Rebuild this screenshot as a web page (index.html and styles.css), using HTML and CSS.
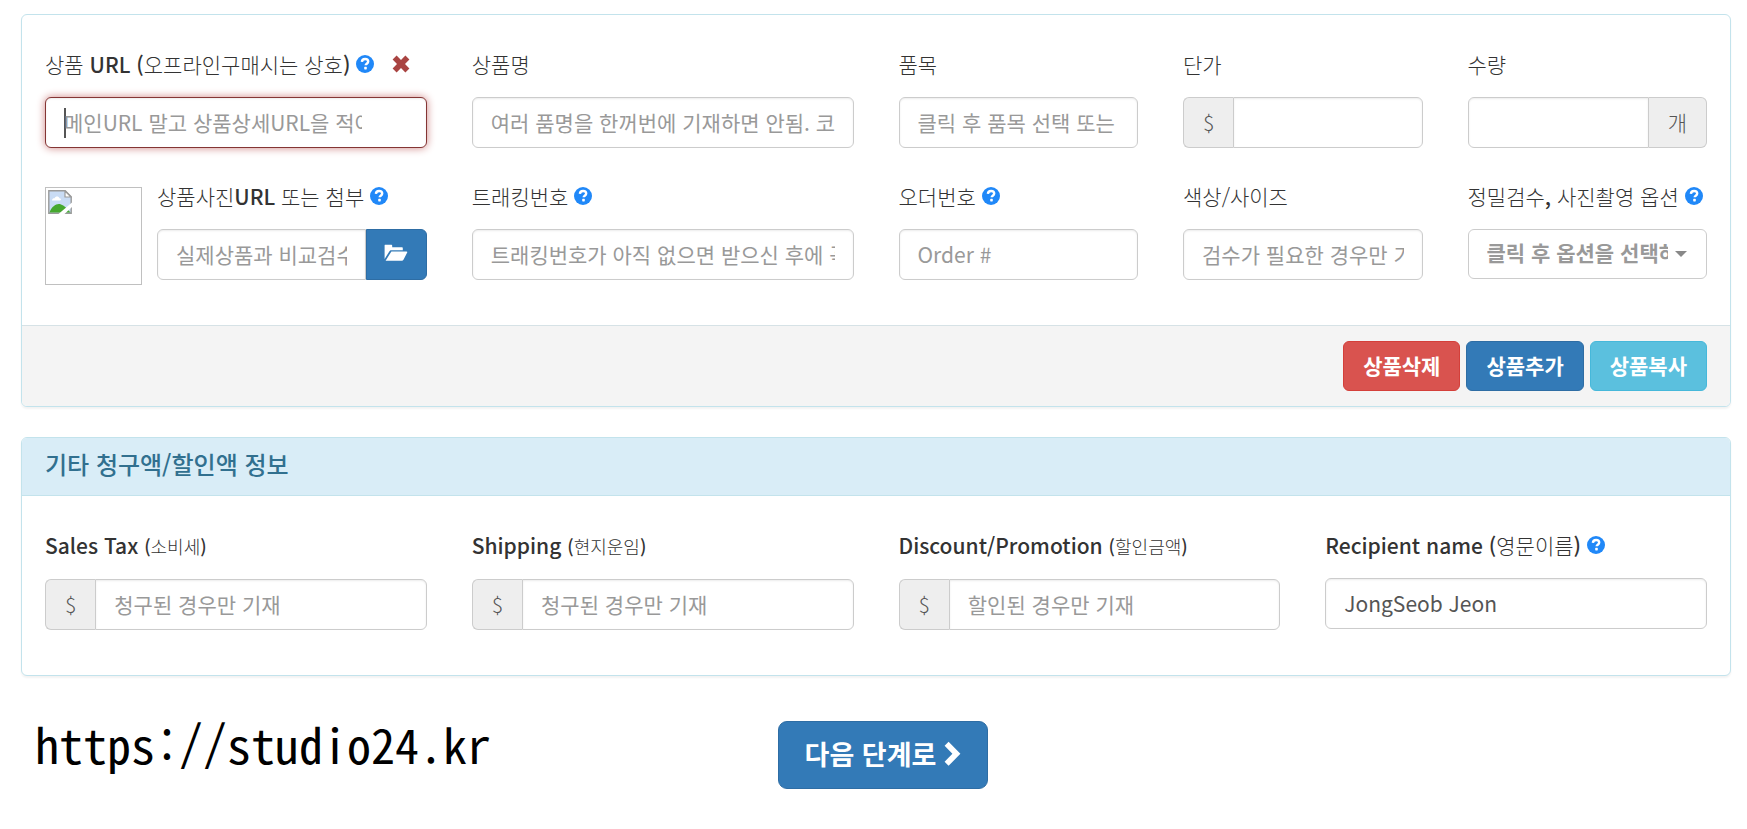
FILE: index.html
```
<!DOCTYPE html>
<html lang="ko">
<head>
  <meta charset="UTF-8">
  <title>상품 정보 입력</title>
  <link rel="stylesheet" href="styles.css">
</head>
<body>
  <!-- shared icons -->
  <svg class="sprite" width="0" height="0" aria-hidden="true">
    <symbol id="icon-help" viewBox="0 0 18 18">
      <circle cx="9" cy="9" r="9" fill="currentColor"/>
      <path d="M5.9 6.9C6 4.9 7.3 4 9.1 4c1.8 0 3.1 1 3.1 2.6 0 2.1-2.5 2.2-2.5 3.7" fill="none" stroke="#fff" stroke-width="2.4"/>
      <rect x="8.2" y="11.8" width="2.6" height="2.6" rx="0.6" fill="#fff"/>
    </symbol>
    <symbol id="icon-remove" viewBox="0 0 18 18">
      <path d="M4.6 0.6 9 5l4.4-4.4 4 4L13 9l4.4 4.4-4 4L9 13l-4.4 4.4-4-4L5 9 0.6 4.6z" fill="currentColor"/>
    </symbol>
    <symbol id="icon-folder" viewBox="0 0 24 18">
      <path d="M1 0.8h6.2c.6 0 1 .4 1 1v1.4h9.6c.6 0 1 .4 1 1v2H7.4c-1 0-1.6.4-2.1 1.2L.6 15V1.5C.6 1 .7.8 1 .8z" fill="currentColor"/>
      <path d="M7.4 7.4h15c.8 0 1.1.5.8 1.1l-3.6 7c-.4.8-1 1.2-1.9 1.2H1.6z" fill="currentColor"/>
    </symbol>
    <symbol id="icon-chevron" viewBox="0 0 17 26">
      <path d="M4.6 0.8 16.4 12.8 4.6 24.8 0.6 20.8 8.4 12.8 0.6 4.8z" fill="currentColor"/>
    </symbol>
  </svg>

  <form action="">
    <section class="panel">
      <div class="panel-body">
        <div class="field col-3">
          <div class="label-row">
            <label for="url">상품 <b>URL (</b>오프라인구매시는 상호<b>)</b></label>
            <svg class="icon help"><use href="#icon-help"/></svg>
            <svg class="icon remove"><use href="#icon-remove"/></svg>
          </div>
          <input id="url" class="control has-error" type="text" placeholder="메인URL 말고 상품상세URL을 적어주세요">
        </div>
        <div class="field col-3">
          <div class="label-row"><label for="name">상품명</label></div>
          <input id="name" class="control" type="text" placeholder="여러 품명을 한꺼번에 기재하면 안됨. 코드">
        </div>
        <div class="field col-2">
          <div class="label-row"><label for="item">품목</label></div>
          <input id="item" class="control" type="text" placeholder="클릭 후 품목 선택 또는 타이핑">
        </div>
        <div class="field col-2">
          <div class="label-row"><label for="price">단가</label></div>
          <div class="group">
            <span class="addon">$</span>
            <input id="price" class="control" type="text">
          </div>
        </div>
        <div class="field col-2">
          <div class="label-row"><label for="qty">수량</label></div>
          <div class="group">
            <input id="qty" class="control" type="text">
            <span class="addon">개</span>
          </div>
        </div>

        <div class="photo col-3">
          <div class="thumb">
            <svg width="24" height="24" viewBox="0 0 24 24">
              <path d="M0.8 0.8h16.4l6 6v16.4H0.8z" fill="#c9dcf5" stroke="#9a9a9a" stroke-width="1.4"/>
              <path d="M17 1v6h6z" fill="#fff" stroke="#9a9a9a" stroke-width="1.2"/>
              <path d="M4 10.5c0-2 1.6-2.5 2.6-2.3C7.2 6 11 6 11.4 8.3c1.8 0 2.2 2.2.6 2.2z" fill="#fff"/>
              <path d="M1.5 22.5C4 16 9 13 13 14.5c3 .8 6 4 9.5 8z" fill="#46a82f"/>
              <path d="M10.5 24 24 12.5V17l-7.5 7z" fill="#fff"/>
            </svg>
          </div>
          <div class="field">
            <div class="label-row">
              <label for="photo">상품사진<b>URL</b> 또는 첨부</label>
              <svg class="icon help"><use href="#icon-help"/></svg>
            </div>
            <div class="group">
              <input id="photo" class="control" type="text" placeholder="실제상품과 비교검수">
              <button class="browse" type="button" aria-label="첨부"><svg width="24" height="18"><use href="#icon-folder"/></svg></button>
            </div>
          </div>
        </div>
        <div class="field col-3">
          <div class="label-row">
            <label for="tracking">트래킹번호</label>
            <svg class="icon help"><use href="#icon-help"/></svg>
          </div>
          <input id="tracking" class="control" type="text" placeholder="트래킹번호가 아직 없으면 받으신 후에 꼭 기재">
        </div>
        <div class="field col-2">
          <div class="label-row">
            <label for="order">오더번호</label>
            <svg class="icon help"><use href="#icon-help"/></svg>
          </div>
          <input id="order" class="control" type="text" placeholder="Order #">
        </div>
        <div class="field col-2">
          <div class="label-row"><label for="size">색상/사이즈</label></div>
          <input id="size" class="control" type="text" placeholder="검수가 필요한 경우만 기재">
        </div>
        <div class="field col-2">
          <div class="label-row">
            <label for="option">정밀검수<b>,</b> 사진촬영 옵션</label>
            <svg class="icon help"><use href="#icon-help"/></svg>
          </div>
          <div class="select">
            <select id="option">
              <option>클릭 후 옵션을 선택하세요</option>
            </select>
          </div>
        </div>
      </div>
      <div class="panel-footer">
        <button class="btn btn-danger" type="button">상품삭제</button>
        <button class="btn btn-primary" type="button">상품추가</button>
        <button class="btn btn-info" type="button">상품복사</button>
      </div>
    </section>

    <section class="panel">
      <h2 class="panel-heading">기타 청구액/할인액 정보</h2>
      <div class="panel-body">
        <div class="field col-3">
          <div class="label-row"><label for="tax"><b>Sales Tax</b> <small><b>(</b>소비세<b>)</b></small></label></div>
          <div class="group">
            <span class="addon">$</span>
            <input id="tax" class="control" type="text" placeholder="청구된 경우만 기재">
          </div>
        </div>
        <div class="field col-3">
          <div class="label-row"><label for="shipping"><b>Shipping</b> <small><b>(</b>현지운임<b>)</b></small></label></div>
          <div class="group">
            <span class="addon">$</span>
            <input id="shipping" class="control" type="text" placeholder="청구된 경우만 기재">
          </div>
        </div>
        <div class="field col-3">
          <div class="label-row"><label for="discount"><b>Discount/Promotion</b> <small><b>(</b>할인금액<b>)</b></small></label></div>
          <div class="group">
            <span class="addon">$</span>
            <input id="discount" class="control" type="text" placeholder="할인된 경우만 기재">
          </div>
        </div>
        <div class="field col-3">
          <div class="label-row">
            <label for="recipient"><b>Recipient name (</b>영문이름<b>)</b></label>
            <svg class="icon help"><use href="#icon-help"/></svg>
          </div>
          <input id="recipient" class="control" type="text" value="JongSeob Jeon">
        </div>
      </div>
    </section>

    <div class="actions">
      <p class="site">https://studio24.kr</p>
      <button class="btn btn-primary btn-lg" type="submit">다음 단계로 <svg width="17" height="26"><use href="#icon-chevron"/></svg></button>
    </div>
  </form>
</body>
</html>
```
FILE: styles.css
```
* {
  box-sizing: border-box;
}

body {
  margin: 0;
  padding: 14px 16px 32px 21px;
  background: #fff;
  color: #333;
  font-family: "Noto Sans CJK KR", sans-serif;
  font-size: 21px;
  line-height: 30px;
}

.sprite {
  position: absolute;
}

.panel {
  margin-bottom: 30px;
  border: 1px solid #c3e3ec;
  border-radius: 6px;
  background: #fff;
  box-shadow: 0 2px 2px rgba(0, 0, 0, 0.05);
  overflow: hidden;
}

.panel-heading {
  margin: 0;
  padding: 11px 23px 16px;
  border-bottom: 1px solid #c3e3ec;
  background: #d9edf7;
  color: #31708f;
  font-size: 24px;
  font-weight: 500;
}

.panel-body {
  display: grid;
  grid-template-columns: repeat(12, minmax(0, 1fr));
  gap: 33px 45px;
  padding: 34px 23px 45px;
}

.col-3 {
  grid-column: span 3;
}

.col-2 {
  grid-column: span 2;
}

.panel-footer {
  display: flex;
  justify-content: flex-end;
  gap: 6px;
  padding: 15px 23px;
  border-top: 1px solid #d6e2e6;
  background: #f4f4f4;
}

/* fields */
.field {
  min-width: 0;
}

.label-row {
  display: flex;
  align-items: center;
  margin-bottom: 18px;
  white-space: nowrap;
}

label {
  font-weight: 300;
}

label b {
  font-weight: 500;
}

label small {
  font-size: 18px;
}

.icon {
  flex: none;
  width: 18px;
  height: 18px;
  margin-left: 6px;
}

.help {
  color: #2088f8;
}

.remove {
  margin-left: 18px;
  color: #a94442;
}

.control {
  display: block;
  width: 100%;
  min-width: 0;
  height: 51px;
  padding: 0 18px 2px;
  border: 1px solid #ccc;
  border-radius: 6px;
  background: #fff;
  box-shadow: inset 0 1px 2px rgba(0, 0, 0, 0.08);
  color: #555;
  font: inherit;
  outline: none;
}

.control::placeholder {
  color: #999;
  opacity: 1;
}

/* the field being edited, with its text cursor */
.has-error {
  padding-right: 64px;
  border-color: #843534;
  background: linear-gradient(#555, #555) 18px center / 2px 30px no-repeat #fff;
  box-shadow: inset 0 1px 2px rgba(0, 0, 0, 0.08), 0 0 9px #ce8483;
}

.group {
  display: flex;
}

.group .control {
  flex: 1;
}

.addon {
  display: flex;
  align-items: center;
  padding: 0 19px 2px;
  border: 1px solid #ccc;
  background: #eee;
  color: #555;
  font-weight: 300;
}

.addon:first-child {
  border-right: 0;
  border-radius: 6px 0 0 6px;
}

.addon:last-child {
  border-left: 0;
  border-radius: 0 6px 6px 0;
}

.group .control:first-child {
  border-radius: 6px 0 0 6px;
}

.group .control:last-child {
  border-radius: 0 6px 6px 0;
}

.photo {
  display: flex;
  align-items: flex-start;
  gap: 15px;
}

.photo .field {
  flex: 1;
}

/* hangs a little below the input beside it */
.thumb {
  flex: none;
  width: 97px;
  height: 98px;
  margin: 6px 0 -5px;
  padding: 2px;
  border: 1px solid #c0c0c0;
}

.thumb svg {
  display: block;
}

.browse {
  display: flex;
  align-items: center;
  justify-content: center;
  width: 61px;
  padding: 0 0 4px;
  border: 1px solid #2e6da4;
  border-radius: 0 6px 6px 0;
  background: #337ab7;
  color: #fff;
}

.select {
  position: relative;
}

.select::after {
  content: "";
  position: absolute;
  top: 22px;
  right: 20px;
  border: 6px solid transparent;
  border-top-color: #888;
  border-bottom: 0;
}

.select select {
  appearance: none;
  display: block;
  width: 100%;
  height: 50px;
  padding: 0 38px 4px 18px;
  border: 1px solid #ccc;
  border-radius: 6px;
  background: #fff;
  color: #999;
  font: inherit;
  font-weight: 700;
}

/* buttons */
.btn {
  padding: 8px 19px 10px;
  border: 1px solid;
  border-radius: 6px;
  color: #fff;
  font: inherit;
  font-weight: 700;
  cursor: pointer;
}

.btn-danger {
  border-color: #d43f3a;
  background: #d9534f;
}

.btn-primary {
  border-color: #2e6da4;
  background: #337ab7;
}

.btn-info {
  border-color: #46b8da;
  background: #5bc0de;
}

.btn-lg {
  display: flex;
  align-items: center;
  gap: 8px;
  padding: 14px 26px 16px;
  border-radius: 9px;
  font-size: 27px;
  line-height: 36px;
}

.actions {
  display: grid;
  grid-template-columns: 1fr auto 1fr;
  align-items: start;
  margin-top: 45px;
  padding-left: 14px;
}

.site {
  margin: 0;
  color: #000;
  font-family: "Noto Sans Mono CJK KR", "Liberation Mono", monospace;
  font-size: 48px;
  font-weight: 300;
  line-height: 44px;
}
```
